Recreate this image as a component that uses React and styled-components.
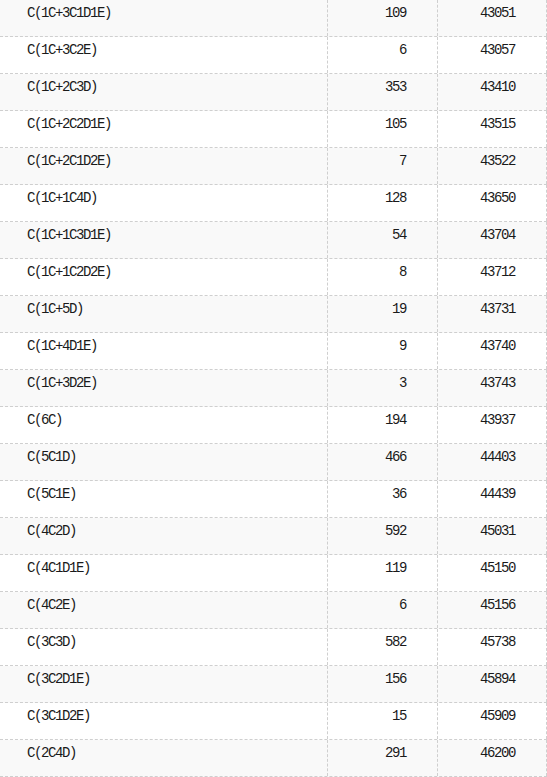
import React from "react";
import styled, { createGlobalStyle } from "styled-components";

const rows = [
  ["C(1C+3C1D1E)", 109],
  ["C(1C+3C2E)", 6],
  ["C(1C+2C3D)", 353],
  ["C(1C+2C2D1E)", 105],
  ["C(1C+2C1D2E)", 7],
  ["C(1C+1C4D)", 128],
  ["C(1C+1C3D1E)", 54],
  ["C(1C+1C2D2E)", 8],
  ["C(1C+5D)", 19],
  ["C(1C+4D1E)", 9],
  ["C(1C+3D2E)", 3],
  ["C(6C)", 194],
  ["C(5C1D)", 466],
  ["C(5C1E)", 36],
  ["C(4C2D)", 592],
  ["C(4C1D1E)", 119],
  ["C(4C2E)", 6],
  ["C(3C3D)", 582],
  ["C(3C2D1E)", 156],
  ["C(3C1D2E)", 15],
  ["C(2C4D)", 291],
];

// running total carried over from the rows above the visible part
const START = 42942;

const GlobalStyle = createGlobalStyle`
  body {
    margin: 0;
    background: #fff;
    overflow: hidden;
  }
`;

const Table = styled.div`
  display: flex;
  flex-direction: column;
  width: 547px;
  font-family: "Liberation Mono", "DejaVu Sans Mono", monospace;
  font-size: 14px;
  letter-spacing: -1.4px;
  color: #1a1a1a;
`;

const Row = styled.div`
  display: grid;
  grid-template-columns: 328px 110px 109px;
  height: 37px;
  border-bottom: 1px dashed #cfcfcf;
  box-sizing: border-box;
  background: ${({ $odd }) => ($odd ? "#f9f9f9" : "#fff")};
`;

const Cell = styled.div`
  box-sizing: border-box;
  border-right: 1px dashed #cfcfcf;
  padding: 3px ${({ $num }) => ($num ? "31px" : "0")} 0
    ${({ $num }) => ($num ? "0" : "27px")};
  line-height: 20px;
  text-align: ${({ $num }) => ($num ? "right" : "left")};
  white-space: nowrap;
`;

export default function App() {
  let total = START;
  return (
    <>
      <GlobalStyle />
      <Table>
        {rows.map(([name, count], i) => {
          total += count;
          return (
            <Row key={name} $odd={i % 2 === 0}>
              <Cell>{name}</Cell>
              <Cell $num>{count}</Cell>
              <Cell $num>{total}</Cell>
            </Row>
          );
        })}
      </Table>
    </>
  );
}
